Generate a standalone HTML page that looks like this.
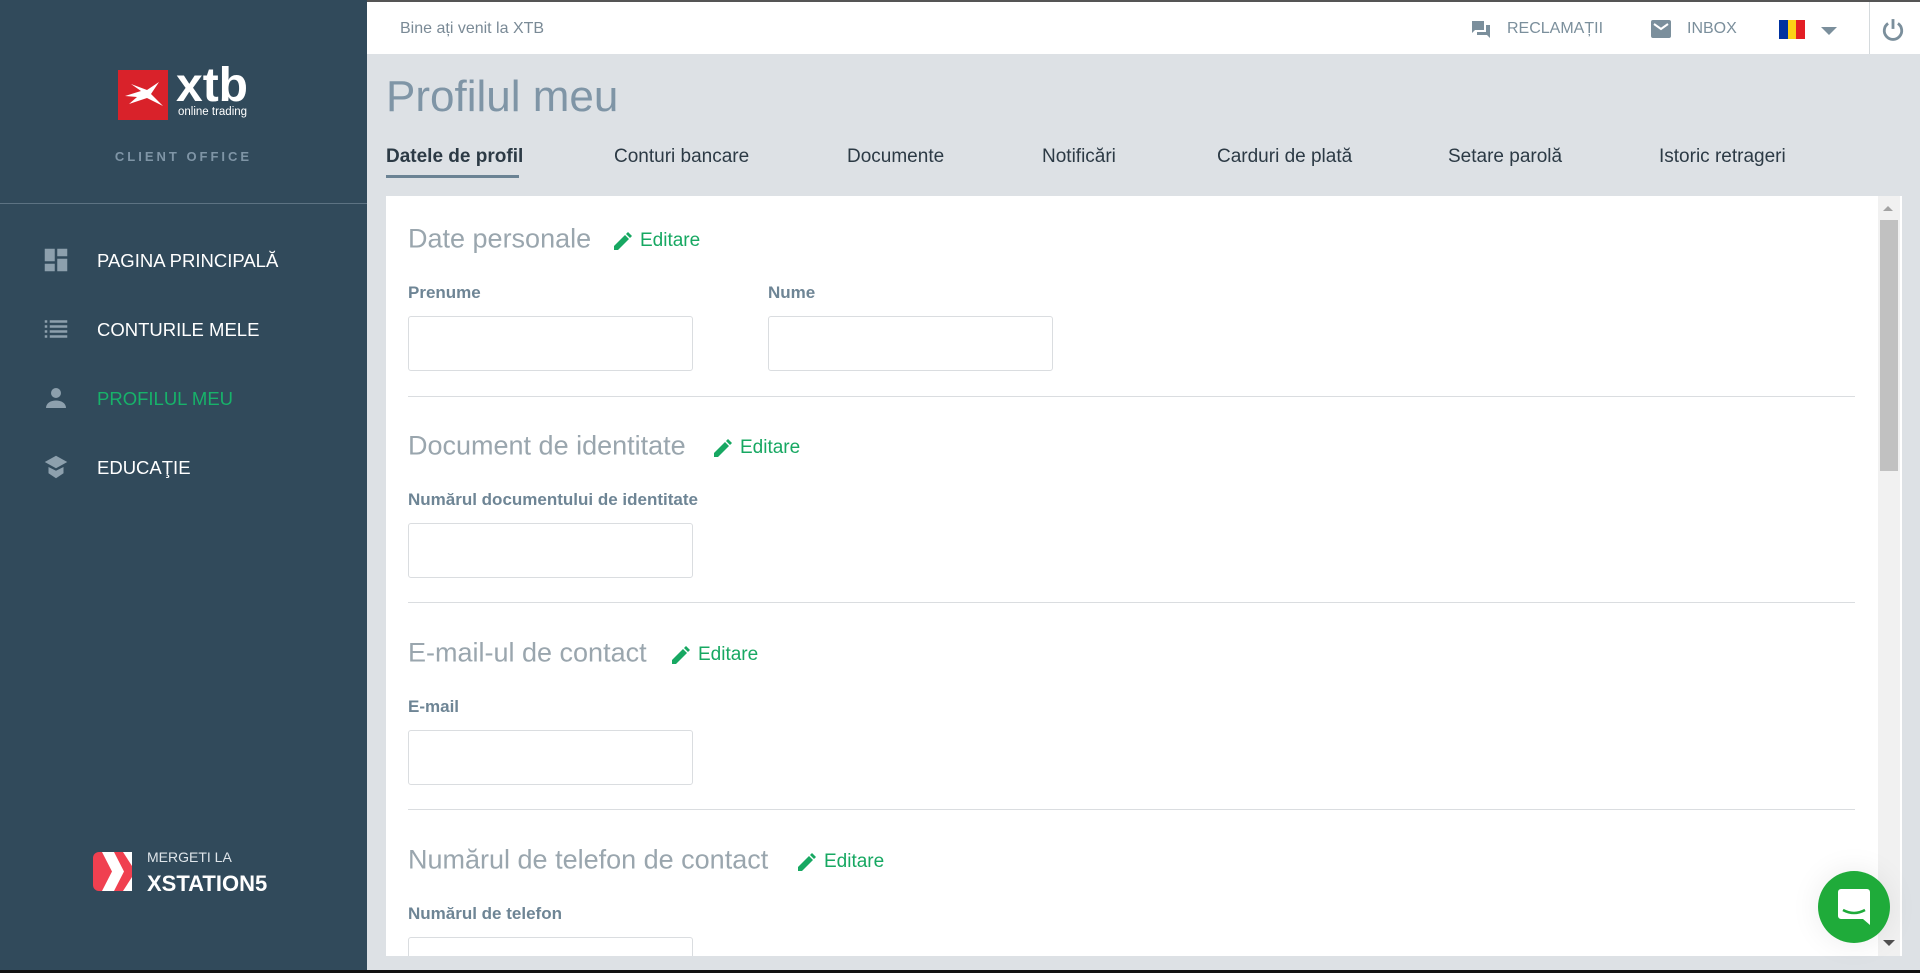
<!DOCTYPE html>
<html><head><meta charset="utf-8"><style>
*{margin:0;padding:0;box-sizing:border-box}
body{width:1920px;height:973px;overflow:hidden;font-family:"Liberation Sans",sans-serif;background:#dde1e5;position:relative}
.abs{position:absolute}
#side{left:0;top:0;width:367px;height:973px;background:#314a5b}
.nav{position:absolute;left:97px;font-size:18.5px;color:#fff;transform:translateY(-50%)}
.ni{position:absolute;left:41px;width:30px;height:30px;transform:translateY(-50%)}
#top{left:367px;top:0;width:1553px;height:54px;background:#fff;border-top:2px solid #555}
.tab{position:absolute;top:146px;font-size:19px;color:#2c3a45}
#card{left:386px;top:196px;width:1516px;height:760px;background:#fff;overflow:hidden}
.st{position:absolute;left:22px;font-size:27px;color:#9aa6ae;transform:translateY(-50%)}
.ed{position:absolute;font-size:19px;color:#17a862;transform:translateY(-50%);display:flex;align-items:center;gap:8px}
.lb{position:absolute;left:22px;font-size:17px;font-weight:bold;color:#6e8595;transform:translateY(-50%)}
.in{position:absolute;width:285px;height:55px;border:1px solid #dadde0;border-radius:3px}
.sep{position:absolute;left:22px;width:1447px;height:1px;background:#dadde0}
</style></head><body>
<div id="side" class="abs">
 <div class="abs" style="left:118px;top:70px;width:50px;height:50px;background:#d9222a"></div>
 <svg class="abs" style="left:121px;top:80px" width="44" height="30" viewBox="0 0 44 30"><path d="M4 16 L20 11 L10 4 L26 10 L38 2 L30 14 L42 26 L26 18 L8 24 L16 17 Z" fill="#fff"/></svg>
 <div class="abs" style="left:176px;top:62px;font-size:48px;font-weight:bold;color:#fff;letter-spacing:0px;line-height:48px">xtb</div>
 <div class="abs" style="left:178px;top:106px;font-size:11.5px;color:#fff">online trading</div>
 <div class="abs" style="left:0;width:367px;top:149px;text-align:center;font-size:13px;font-weight:bold;letter-spacing:3px;color:#7f95a6">CLIENT OFFICE</div>
 <div class="abs" style="left:0;top:203px;width:367px;height:1px;background:#5d7383"></div>
 <svg class="ni" style="top:260px" viewBox="0 0 24 24"><path fill="#8da0ad" d="M3 3h8v10H3zM13 3h8v6h-8zM13 11h8v10h-8zM3 15h8v6H3z"/></svg>
 <div class="nav" style="top:261px">PAGINA PRINCIPALĂ</div>
 <svg class="ni" style="top:329px" viewBox="0 0 24 24"><path fill="#8da0ad" d="M3 5h2v2H3zM7 5h14v2H7zM3 9h2v2H3zM7 9h14v2H7zM3 13h2v2H3zM7 13h14v2H7zM3 17h2v2H3zM7 17h14v2H7z"/></svg>
 <div class="nav" style="top:330px">CONTURILE MELE</div>
 <svg class="ni" style="top:398px" viewBox="0 0 24 24"><circle cx="12" cy="8" r="4" fill="#8da0ad"/><path fill="#8da0ad" d="M4 20c0-4 4-6 8-6s8 2 8 6z"/></svg>
 <div class="nav" style="top:399px;color:#17b26a">PROFILUL MEU</div>
 <svg class="ni" style="top:467px" viewBox="0 0 24 24"><path fill="#8da0ad" d="M12 3l9 5-9 5-9-5zM6 12v5l6 4 6-4v-5l-6 3z"/></svg>
 <div class="nav" style="top:468px">EDUCAŢIE</div>
 <svg class="abs" style="left:93px;top:852px" width="39" height="39" viewBox="0 0 39 39"><rect width="39" height="39" rx="6" fill="#f04050"/><path d="M9 0h12l10 19.5L21 39H9l10-19.5z" fill="#fff"/><path d="M30 0h9v14zM30 39h9V25z" fill="#fff"/></svg>
 <div class="abs" style="left:147px;top:849px;font-size:14px;color:#dfe5ea">MERGETI LA</div>
 <div class="abs" style="left:147px;top:871px;font-size:22px;font-weight:bold;color:#fff">XSTATION5</div>
</div>
<div id="top" class="abs">
 <div class="abs" style="left:33px;top:18px;font-size:16px;color:#7a8a96">Bine ați venit la XTB</div>
 <svg class="abs" style="left:1104px;top:18px" width="20" height="20" viewBox="0 0 20 20"><path fill="#7b8f9c" d="M1 1h12v9H4l-3 3zM15 5h4v13l-3-3H6v-3h9z"/></svg>
 <div class="abs" style="left:1140px;top:18px;font-size:16px;color:#7b8f9c">RECLAMAȚII</div>
 <svg class="abs" style="left:1284px;top:18px" width="20" height="18" viewBox="0 0 20 18"><rect width="20" height="18" rx="2" fill="#7b8f9c"/><path d="M3 4l7 5 7-5" stroke="#fff" stroke-width="2" fill="none"/></svg>
 <div class="abs" style="left:1320px;top:18px;font-size:16px;color:#7b8f9c">INBOX</div>
 <div class="abs" style="left:1412px;top:18px;width:9px;height:19px;background:#0032a0"></div>
 <div class="abs" style="left:1421px;top:18px;width:8px;height:19px;background:#fcd116"></div>
 <div class="abs" style="left:1429px;top:18px;width:9px;height:19px;background:#e31e24"></div>
 <div class="abs" style="left:1454px;top:25px;border-left:8px solid transparent;border-right:8px solid transparent;border-top:8px solid #7b8f9c"></div>
 <div class="abs" style="left:1502px;top:0;width:1px;height:52px;background:#d5dadd"></div>
 <svg class="abs" style="left:1514px;top:16px" width="24" height="24" viewBox="0 0 22 22"><path d="M6.5 5A8 8 0 1 0 15.5 5" stroke="#7b8f9c" stroke-width="2.6" fill="none"/><path d="M11 1v9" stroke="#7b8f9c" stroke-width="2.6"/></svg>
</div>
<div class="abs" style="left:386px;top:72px;font-size:44px;color:#7f95a6">Profilul meu</div>
<div class="tab" style="left:386px;font-weight:bold">Datele de profil</div>
<div class="abs" style="left:386px;top:175px;width:133px;height:3px;background:#6b8394"></div>
<div class="tab" style="left:614px">Conturi bancare</div>
<div class="tab" style="left:847px">Documente</div>
<div class="tab" style="left:1042px">Notificări</div>
<div class="tab" style="left:1217px">Carduri de plată</div>
<div class="tab" style="left:1448px">Setare parolă</div>
<div class="tab" style="left:1659px">Istoric retrageri</div>
<div id="card" class="abs">
 <div class="st" style="top:43px">Date personale</div>
 <div class="ed" style="left:228px;top:45px"><svg width="18" height="18" viewBox="0 0 18 18"><path fill="#17a862" d="M0 14v4h4L15 7l-4-4zM12 2l4 4 2-2-4-4z"/></svg>Editare</div>
 <div class="lb" style="top:97px">Prenume</div>
 <div class="lb" style="top:97px;left:382px">Nume</div>
 <div class="in" style="left:22px;top:120px"></div>
 <div class="in" style="left:382px;top:120px"></div>
 <div class="sep" style="top:200px"></div>
 <div class="st" style="top:250px">Document de identitate</div>
 <div class="ed" style="left:328px;top:252px"><svg width="18" height="18" viewBox="0 0 18 18"><path fill="#17a862" d="M0 14v4h4L15 7l-4-4zM12 2l4 4 2-2-4-4z"/></svg>Editare</div>
 <div class="lb" style="top:304px">Numărul documentului de identitate</div>
 <div class="in" style="left:22px;top:327px"></div>
 <div class="sep" style="top:406px"></div>
 <div class="st" style="top:457px">E-mail-ul de contact</div>
 <div class="ed" style="left:286px;top:459px"><svg width="18" height="18" viewBox="0 0 18 18"><path fill="#17a862" d="M0 14v4h4L15 7l-4-4zM12 2l4 4 2-2-4-4z"/></svg>Editare</div>
 <div class="lb" style="top:511px">E-mail</div>
 <div class="in" style="left:22px;top:534px"></div>
 <div class="sep" style="top:613px"></div>
 <div class="st" style="top:664px">Numărul de telefon de contact</div>
 <div class="ed" style="left:412px;top:666px"><svg width="18" height="18" viewBox="0 0 18 18"><path fill="#17a862" d="M0 14v4h4L15 7l-4-4zM12 2l4 4 2-2-4-4z"/></svg>Editare</div>
 <div class="lb" style="top:718px">Numărul de telefon</div>
 <div class="in" style="left:22px;top:741px"></div>
 <div class="abs" style="left:1492px;top:0;width:22px;height:760px;background:#f1f1f1"></div>
 <div class="abs" style="left:1497px;top:10px;border-left:5px solid transparent;border-right:5px solid transparent;border-bottom:5px solid #a3a3a3"></div>
 <div class="abs" style="left:1494px;top:24px;width:18px;height:251px;background:#c1c1c1"></div>
 <div class="abs" style="left:1497px;top:744px;border-left:6px solid transparent;border-right:6px solid transparent;border-top:6px solid #505050"></div>
</div>
<div class="abs" style="left:1818px;top:871px;width:72px;height:72px;border-radius:50%;background:#1fab3a;box-shadow:0 0 30px rgba(0,0,0,.08)"></div>
<svg class="abs" style="left:1838px;top:889px" width="32" height="36" viewBox="0 0 32 36"><path d="M3 0h26a3 3 0 0 1 3 3v33l-7-6H3a3 3 0 0 1-3-3V3a3 3 0 0 1 3-3z" fill="#fff"/><path d="M5 21q11 6 22 0" stroke="#1fab3a" stroke-width="2.5" fill="none"/></svg>
<div class="abs" style="left:0;top:970px;width:1920px;height:3px;background:#111"></div>
</body></html>
